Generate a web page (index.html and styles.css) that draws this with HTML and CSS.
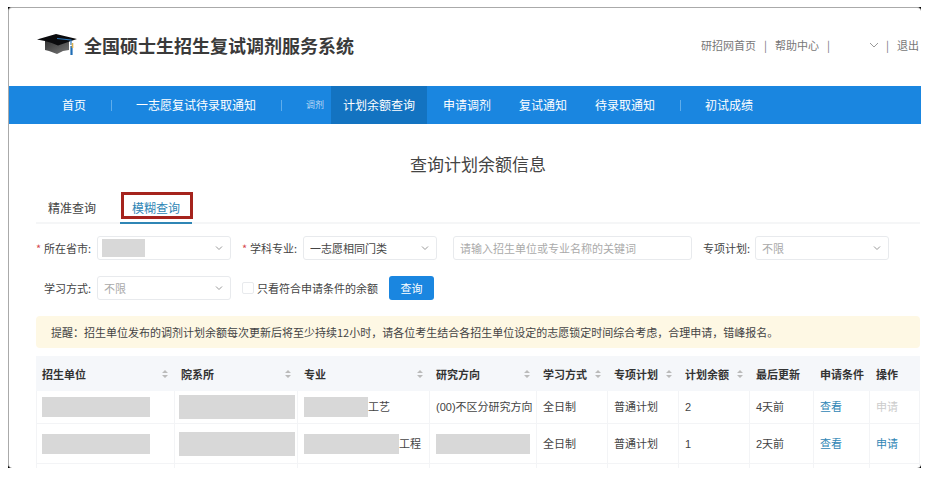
FILE: index.html
```
<!DOCTYPE html>
<html lang="zh-CN">
<head>
    <meta charset="UTF-8">
    <meta name="viewport" content="width=device-width, initial-scale=1.0">
    <title>全国硕士生招生复试调剂服务系统</title>
    <link rel="stylesheet" href="styles.css">
</head>
<body>
    <div class="frame">
        <div class="page">
            <header class="header">
                <div class="brand">
                    <svg class="logo" viewBox="0 0 40 22" aria-hidden="true">
                        <defs>
                            <linearGradient id="cap" x1="0" y1="0" x2="1" y2="1">
                                <stop offset="0" stop-color="#333"/>
                                <stop offset="1" stop-color="#777"/>
                            </linearGradient>
                        </defs>
                        <path d="M8 7v9l4 1 8 3 6-3 6-1V7z" fill="url(#cap)"/>
                        <path d="M0 5.500L19 0l21 5-6 2-13 4.500q-6-3-13-4.500z" fill="#0b0b0d"/>
                        <path d="M20 4.500l14 1.500v5" fill="none" stroke="#2d79bd" stroke-width="1.200"/>
                        <path d="M34.500 12v9" stroke="#1f6db5" stroke-width="2.200"/>
                        <path d="M35.500 9v5" stroke="#d9b050" stroke-width="1.600"/>
                    </svg>
                    <h1>全国硕士生招生复试调剂服务系统</h1>
                </div>
                <div class="user-links">
                    <a href="#">研招网首页</a>
                    <span>|</span>
                    <a href="#">帮助中心</a>
                    <span>|</span>
                    <button type="button" class="user-menu" aria-label="用户菜单">
                        <svg class="chevron" viewBox="0 0 8 8"><path d="M0 2l4 4 4-4"/></svg>
                    </button>
                    <span>|</span>
                    <a href="#">退出</a>
                </div>
            </header>

            <nav class="nav">
                <a href="#">首页</a>
                <i class="divider"></i>
                <a href="#">一志愿复试待录取通知</a>
                <i class="divider"></i>
                <span class="nav-group">调剂</span>
                <a href="#" class="active">计划余额查询</a>
                <a href="#">申请调剂</a>
                <a href="#">复试通知</a>
                <a href="#">待录取通知</a>
                <i class="divider"></i>
                <a href="#">初试成绩</a>
            </nav>

            <main class="content">
                <h2>查询计划余额信息</h2>

                <div class="tabs">
                    <a href="#" class="tab">精准查询</a>
                    <a href="#" class="tab current">模糊查询<span class="mark"></span></a>
                </div>

                <form class="filters">
                    <div class="filter-row">
                        <div class="field">
                            <label for="province"><b class="star">*</b>所在省市:</label>
                            <div class="select">
                                <select id="province"><option></option></select>
                                <span class="mask-select"></span>
                                <svg class="chevron" viewBox="0 0 8 8"><path d="M1 2.500l3 3 3-3"/></svg>
                            </div>
                        </div>
                        <div class="field">
                            <label for="subject"><b class="star">*</b>学科专业:</label>
                            <div class="select">
                                <select id="subject"><option>一志愿相同门类</option></select>
                                <svg class="chevron" viewBox="0 0 8 8"><path d="M1 2.500l3 3 3-3"/></svg>
                            </div>
                        </div>
                        <input type="text" class="keyword" aria-label="关键词" placeholder="请输入招生单位或专业名称的关键词">
                        <div class="field">
                            <label for="special" class="short">专项计划:</label>
                            <div class="select">
                                <select id="special" class="empty"><option>不限</option></select>
                                <svg class="chevron" viewBox="0 0 8 8"><path d="M1 2.500l3 3 3-3"/></svg>
                            </div>
                        </div>
                    </div>
                    <div class="filter-row">
                        <div class="field">
                            <label for="mode"><b class="star"></b>学习方式:</label>
                            <div class="select">
                                <select id="mode" class="empty"><option>不限</option></select>
                                <svg class="chevron" viewBox="0 0 8 8"><path d="M1 2.500l3 3 3-3"/></svg>
                            </div>
                        </div>
                        <div class="check">
                            <input type="checkbox" id="matched">
                            <label for="matched">只看符合申请条件的余额</label>
                        </div>
                        <button type="submit" class="submit">查询</button>
                    </div>
                </form>

                <p class="notice">提醒：招生单位发布的调剂计划余额每次更新后将至少持续12小时，请各位考生结合各招生单位设定的志愿锁定时间综合考虑，合理申请，错峰报名。</p>

                <table class="results">
                    <colgroup>
                        <col class="col-school">
                        <col class="col-dept">
                        <col class="col-major">
                        <col class="col-field">
                        <col class="col-mid">
                        <col class="col-mid">
                        <col class="col-mid">
                        <col class="col-date">
                        <col class="col-cond">
                        <col>
                    </colgroup>
                    <thead>
                        <tr>
                            <th><div class="sortable">招生单位<svg class="sorter" viewBox="0 0 6 8"><path d="M0 3l3-3 3 3zM0 5l3 3 3-3z"/></svg></div></th>
                            <th><div class="sortable">院系所<svg class="sorter" viewBox="0 0 6 8"><path d="M0 3l3-3 3 3zM0 5l3 3 3-3z"/></svg></div></th>
                            <th><div class="sortable">专业<svg class="sorter" viewBox="0 0 6 8"><path d="M0 3l3-3 3 3zM0 5l3 3 3-3z"/></svg></div></th>
                            <th><div class="sortable">研究方向<svg class="sorter" viewBox="0 0 6 8"><path d="M0 3l3-3 3 3zM0 5l3 3 3-3z"/></svg></div></th>
                            <th><div class="sortable">学习方式<svg class="sorter" viewBox="0 0 6 8"><path d="M0 3l3-3 3 3zM0 5l3 3 3-3z"/></svg></div></th>
                            <th><div class="sortable">专项计划<svg class="sorter" viewBox="0 0 6 8"><path d="M0 3l3-3 3 3zM0 5l3 3 3-3z"/></svg></div></th>
                            <th><div class="sortable">计划余额<svg class="sorter" viewBox="0 0 6 8"><path d="M0 3l3-3 3 3zM0 5l3 3 3-3z"/></svg></div></th>
                            <th>最后更新</th>
                            <th>申请条件</th>
                            <th>操作</th>
                        </tr>
                    </thead>
                    <tbody>
                        <tr>
                            <td><div class="masked"><span class="mask mask-school"></span></div></td>
                            <td class="tight"><div class="masked"><span class="mask mask-dept"></span></div></td>
                            <td><div class="masked"><span class="mask mask-major"></span>工艺</div></td>
                            <td>(00)不区分研究方向</td>
                            <td>全日制</td>
                            <td>普通计划</td>
                            <td>2</td>
                            <td>4天前</td>
                            <td><a href="#">查看</a></td>
                            <td><span class="disabled">申请</span></td>
                        </tr>
                        <tr class="tall">
                            <td><div class="masked"><span class="mask mask-school"></span></div></td>
                            <td class="tight"><div class="masked"><span class="mask mask-dept"></span></div></td>
                            <td><div class="masked"><span class="mask mask-major-long"></span>工程</div></td>
                            <td><div class="masked"><span class="mask mask-field"></span></div></td>
                            <td>全日制</td>
                            <td>普通计划</td>
                            <td>1</td>
                            <td>2天前</td>
                            <td><a href="#">查看</a></td>
                            <td><a href="#">申请</a></td>
                        </tr>
                        <tr class="cut">
                            <td></td><td></td><td></td><td></td><td></td>
                            <td></td><td></td><td></td><td></td><td></td>
                        </tr>
                    </tbody>
                </table>
            </main>
        </div>
    </div>
</body>
</html>
```
FILE: styles.css
```
* {
    box-sizing: border-box;
}
body {
    margin: 7px 21px 18px 8px;
    background-color: #fff;
    color: #444;
    font-family: "Noto Sans CJK SC", sans-serif;
    font-size: 11px;
    line-height: 16px;
}
a {
    color: #2f86b5;
    text-decoration: none;
}
input, select, button {
    font: inherit;
    color: inherit;
}
.frame {
    background-color: #000;
}
.page {
    background-color: #fff;
    border-top: 1px solid #aaa;
    border-left: 1px solid #aaa;
    border-radius: 4px;
    overflow: hidden;
}

/* header */
.header {
    display: flex;
    justify-content: space-between;
    align-items: center;
    height: 78px;
    padding: 0 2px 4px 28px;
}
.brand {
    display: flex;
    align-items: center;
    gap: 7px;
}
.logo {
    width: 40px;
    height: 22px;
}
h1 {
    margin: 0;
    font-size: 18px;
    line-height: 24px;
    font-weight: 700;
    color: #3a3a3a;
}
.user-links {
    display: flex;
    align-items: center;
    gap: 8px;
    color: #777;
}
.user-links a {
    color: #777;
}
.user-menu {
    display: flex;
    justify-content: flex-end;
    width: 40px;
    padding: 0;
    border: none;
    background: none;
}
.chevron {
    width: 8px;
    height: 8px;
    fill: none;
    stroke: #999;
    stroke-width: 1;
}

/* navigation */
.nav {
    display: flex;
    align-items: center;
    gap: 4px;
    height: 38px;
    padding-left: 41px;
    background-color: #1a86e0;
    color: #fff;
    font-size: 12px;
}
.nav a {
    padding: 0 12px;
    line-height: 38px;
    color: #fff;
}
.nav .active {
    background-color: #1373c1;
}
.nav-group {
    padding: 0 3px 0 12px;
    font-size: 9px;
    color: #b9d9f5;
}
.divider {
    width: 1px;
    height: 11px;
    margin: 0 8px 0 9px;
    background-color: #5fadeb;
}

/* content */
.content {
    padding: 28px 1px 0 27px;
}
h2 {
    margin: 0 0 20px;
    font-size: 17px;
    line-height: 24px;
    font-weight: 400;
    text-align: center;
}
.tabs {
    display: flex;
    gap: 12px;
    border-bottom: 2px solid #f5f6f7;
    font-size: 12px;
}
.tab {
    position: relative;
    padding: 4px 12px 6px;
    color: #444;
    margin-bottom: -2px;
    border-bottom: 2px solid transparent;
}
.tab.current {
    color: #2f86b5;
    border-bottom-color: #2f86b5;
}
.mark {
    position: absolute;
    top: -4px;
    left: 1px;
    right: -1px;
    bottom: 3px;
    border: 3px solid #a5231d;
}

/* filters */
.filters {
    display: flex;
    flex-direction: column;
    gap: 16px;
    padding: 12px 0 16px;
}
.filter-row {
    display: flex;
    align-items: center;
    gap: 11px;
}
.field {
    display: flex;
    align-items: center;
}
.field label {
    display: flex;
    width: 61px;
}
.field .short {
    width: 52px;
}
.star {
    width: 8px;
    font-weight: 400;
    color: #d6484f;
}
.select {
    position: relative;
    width: 134px;
}
.select select {
    display: block;
    width: 100%;
    height: 24px;
    padding: 0 20px 0 6px;
    border: 1px solid #e8eaed;
    border-radius: 3px;
    background-color: #fff;
    appearance: none;
}
.select .empty {
    color: #aaa;
}
.select .chevron {
    position: absolute;
    top: 8px;
    right: 8px;
    pointer-events: none;
}
.mask-select {
    position: absolute;
    top: 3px;
    left: 5px;
    width: 43px;
    height: 18px;
    background-color: #d8d8d8;
}
.keyword {
    flex: 0 1 239px;
    min-width: 0;
    height: 24px;
    margin-left: 5px;
    padding: 0 6px;
    border: 1px solid #e8eaed;
    border-radius: 3px;
}
.keyword::placeholder {
    color: #aaa;
}
.check {
    display: flex;
    align-items: center;
    gap: 3px;
}
.check input {
    width: 12px;
    height: 12px;
    margin: 0;
    border: 1px solid #e8eaed;
    border-radius: 2px;
    appearance: none;
}
.submit {
    width: 45px;
    height: 24px;
    padding: 0;
    border: none;
    border-radius: 3px;
    background-color: #1a86e0;
    color: #fff;
}
.notice {
    margin: 0 0 8px;
    padding: 8px 15px;
    border-radius: 4px;
    background-color: #fef8e4;
}

/* results */
.results {
    width: 100%;
    table-layout: fixed;
    border-collapse: separate;
    border-spacing: 0;
}
.col-school { width: 139px; }
.col-dept { width: 123px; }
.col-major { width: 132px; }
.col-field { width: 107px; }
.col-mid { width: 71px; }
.col-date { width: 64px; }
.col-cond { width: 56px; }
.results th {
    height: 35px;
    padding: 0 0 0 6px;
    background-color: #f5f7fa;
    text-align: left;
    font-weight: 700;
    color: #333;
    white-space: nowrap;
}
.results td {
    height: 33px;
    padding: 0 0 0 6px;
    border-right: 1px solid #f3f4f6;
    border-bottom: 1px solid #f3f4f6;
    font-family: "Liberation Sans", "Noto Sans CJK SC", sans-serif;
    white-space: nowrap;
}
.results td:first-child {
    border-left: 1px solid #f3f4f6;
    padding-left: 5px;
}
.results .tall td {
    height: 40px;
}
.results .cut td {
    height: 4px;
    border-bottom: none;
}
.results .tight {
    padding-left: 4px;
}
.sortable {
    display: flex;
    justify-content: space-between;
    align-items: center;
    padding-right: 7px;
}
.sorter {
    width: 6px;
    height: 8px;
    fill: #bbb;
}
.masked {
    display: flex;
    align-items: center;
}
.mask {
    height: 20px;
    background-color: #d8d8d8;
}
.mask-school { width: 108px; }
.mask-dept {
    width: 116px;
    height: 24px;
}
.mask-major { width: 64px; }
.mask-major-long { width: 95px; }
.mask-field { width: 94px; }
.disabled {
    color: #ccc;
}
```
